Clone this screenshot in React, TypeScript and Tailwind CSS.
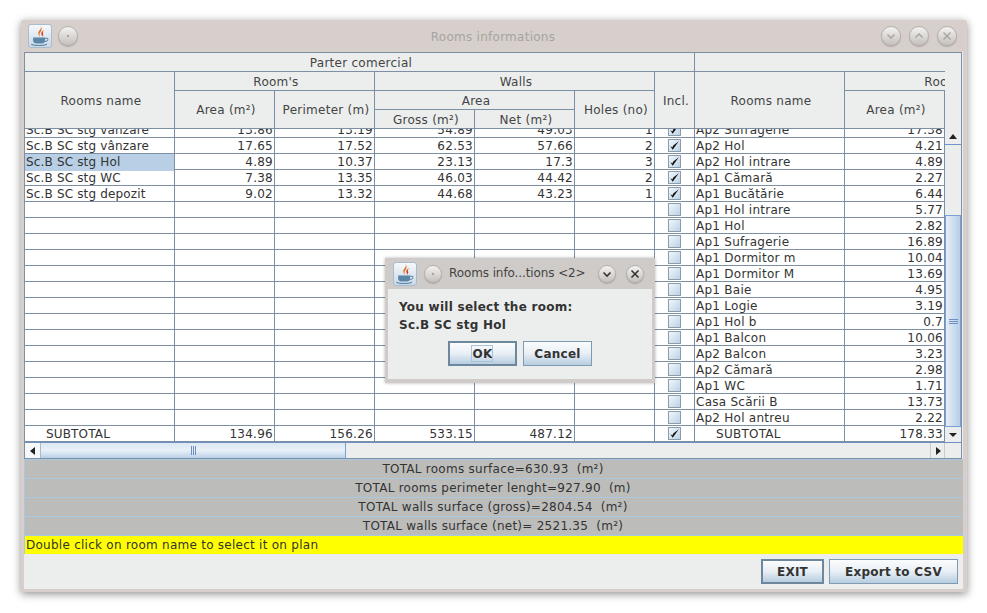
import React from 'react';

type Row = { name?: string; area?: string; perim?: string; gross?: string; net?: string; holes?: string; on: boolean; name2: string; area2: string; pad?: boolean };

const rows: Row[] = [
  { name: 'Sc.B SC stg vânzare', area: '13.86', perim: '13.19', gross: '54.89', net: '49.03', holes: '1', on: true, name2: 'Ap2 Sufragerie', area2: '17.38' },
  { name: 'Sc.B SC stg vânzare', area: '17.65', perim: '17.52', gross: '62.53', net: '57.66', holes: '2', on: true, name2: 'Ap2 Hol', area2: '4.21' },
  { name: 'Sc.B SC stg Hol', area: '4.89', perim: '10.37', gross: '23.13', net: '17.3', holes: '3', on: true, name2: 'Ap2 Hol intrare', area2: '4.89' },
  { name: 'Sc.B SC stg WC', area: '7.38', perim: '13.35', gross: '46.03', net: '44.42', holes: '2', on: true, name2: 'Ap1 Cămară', area2: '2.27' },
  { name: 'Sc.B SC stg depozit', area: '9.02', perim: '13.32', gross: '44.68', net: '43.23', holes: '1', on: true, name2: 'Ap1 Bucătărie', area2: '6.44' },
  { on: false, name2: 'Ap1 Hol intrare', area2: '5.77' },
  { on: false, name2: 'Ap1 Hol', area2: '2.82' },
  { on: false, name2: 'Ap1 Sufragerie', area2: '16.89' },
  { on: false, name2: 'Ap1 Dormitor m', area2: '10.04' },
  { on: false, name2: 'Ap1 Dormitor M', area2: '13.69' },
  { on: false, name2: 'Ap1 Baie', area2: '4.95' },
  { on: false, name2: 'Ap1 Logie', area2: '3.19' },
  { on: false, name2: 'Ap1 Hol b', area2: '0.7' },
  { on: false, name2: 'Ap1 Balcon', area2: '10.06' },
  { on: false, name2: 'Ap2 Balcon', area2: '3.23' },
  { on: false, name2: 'Ap2 Cămară', area2: '2.98' },
  { on: false, name2: 'Ap1 WC', area2: '1.71' },
  { on: false, name2: 'Casa Scării B', area2: '13.73' },
  { on: false, name2: 'Ap2 Hol antreu', area2: '2.22' },
  { name: 'SUBTOTAL', area: '134.96', perim: '156.26', gross: '533.15', net: '487.12', on: true, name2: 'SUBTOTAL', area2: '178.33', pad: true },
];

const totals = [
  'TOTAL rooms surface=630.93  (m²)',
  'TOTAL rooms perimeter lenght=927.90  (m)',
  'TOTAL walls surface (gross)=2804.54  (m²)',
  'TOTAL walls surface (net)= 2521.35  (m²)',
];

const cols = 'grid-cols-[150px_100px_100px_100px_100px_80px_40px_150px_100px]';
const numCell = 'border-r border-[#7d90a3] pr-[1px] text-right';
const head = 'flex items-center justify-center border-r border-b border-[#7d90a3] bg-[#eceeee] pl-[3px] pt-[2px] text-[#444] whitespace-nowrap';

function JavaIcon({ size }: { size: number }) {
  return (
    <svg width={size} height={size} viewBox="0 0 24 24">
      <path d="M12.5 1c2.200 3.400-3.400 5.500-2.200 9 .4 1.200 1.300 2.200 1.800 3-.6-2-1.200-3.200 0-4.800 1.400-2 2.700-3.800.4-7.200z" fill="#e2701a" />
      <path d="M16.500 5.500c-2.300 1.400-3.600 2.700-3 4.600.3.900.9 1.600.7 2.600 1.400-1.200 1.600-2.300 1.100-3.400-.5-1.200 0-2.400 1.200-3.800z" fill="#d8401c" />
      <path d="M4.500 13.500h13v3.500c0 1.900-1.600 3.300-3.500 3.300H8c-1.900 0-3.500-1.400-3.500-3.300z" fill="#5b86a6" />
      <path d="M17.500 14.500c2.500-.5 3.700.5 3 1.900-.6 1.100-2 1.700-3.400 1.900" fill="none" stroke="#5b86a6" strokeWidth="1.100" />
      <path d="M2.500 21c3.400 1.800 13.600 1.800 17 0" fill="none" stroke="#5b86a6" strokeWidth="1.300" />
    </svg>
  );
}

function IconButton({ cls }: { cls: string }) {
  return (
    <div className={`absolute flex items-center justify-center rounded-[3px] border border-[#a9bccd] bg-gradient-to-b from-[#f6f8fa] to-[#c9d9e8] ${cls}`}>
      <JavaIcon size={22} />
    </div>
  );
}

function Round({ cls, kind, dark }: { cls: string; kind: 'dot' | 'down' | 'up' | 'x'; dark?: boolean }) {
  const c = dark ? '#333' : '#a5a19d';
  return (
    <div className={`absolute flex items-center justify-center rounded-full border border-[#b5b0ac] bg-gradient-to-b from-[#f4f3f2] to-[#c4c0bc] shadow-[0_1px_1px_rgba(0,0,0,0.2)] ${cls}`}>
      <svg width="12" height="12" viewBox="0 0 12 12" fill="none" stroke={c} strokeWidth={dark ? 1.600 : 1.300}>
        {kind === 'dot' && <circle cx="6" cy="6" r="0.500" />}
        {kind === 'down' && <path d="M2.500 4.500 6 8l3.500-3.500" />}
        {kind === 'up' && <path d="M2.500 7.500 6 4l3.500 3.500" />}
        {kind === 'x' && <path d="M2.500 2.500l7 7m0-7l-7 7" />}
      </svg>
    </div>
  );
}

function Check({ on }: { on: boolean }) {
  return (
    <div className="mx-auto mt-px flex h-[13px] w-[13px] items-center justify-center border border-[#8b9cac] bg-gradient-to-br from-[#f2f6fa] to-[#bcd2e6]">
      {on && (
        <svg width="11" height="11" viewBox="0 0 9 9">
          <path d="M1 5l2 3 5-7-4.500 3.500-.8 1.600z" fill="#111" />
        </svg>
      )}
    </div>
  );
}

function Arrow({ dir }: { dir: 'up' | 'down' | 'left' | 'right' }) {
  const d = { up: 'M4 1l4 5H0z', down: 'M4 6L0 2h8z', left: 'M1 4l5-4v8z', right: 'M7 4L2 0v8z' }[dir];
  return (
    <svg width="8" height="8" viewBox="0 0 8 8">
      <path d={d} fill="#222" />
    </svg>
  );
}

function Btn({ label, cls, focused }: { label: string; cls: string; focused?: boolean }) {
  return (
    <div className={`absolute flex items-center justify-center bg-gradient-to-b from-[#fbfcfd] via-[#e8eff5] to-[#b7cde0] pt-px font-bold text-[#333] ${focused ? 'border-2 border-[#6d879c]' : 'border border-[#7f9ab3]'} ${cls}`}>
      {label}
    </div>
  );
}

export default function App(): JSX.Element {
  return (
    <div className="relative h-[613px] w-[987px] overflow-hidden bg-white font-[DejaVu_Sans] text-[12px] leading-[15px] tracking-[0.26px] text-[#333]">
      {/* main frame */}
      <div className="absolute left-[21px] top-[20px] h-[572px] w-[946px] rounded-t-[3px] bg-[#d6cfcc] shadow-[0_2px_9px_rgba(0,0,0,0.45)]">
        <div className="absolute left-[3px] top-[32px] h-[537px] w-[939px] bg-[#eceeee]" />
      </div>

      <IconButton cls="left-[28px] top-[24px] h-[24px] w-[24px]" />
      <Round cls="left-[58px] top-[26px] h-[20px] w-[20px]" kind="dot" />
      <div className="absolute left-[20px] top-[29px] w-[946px] pt-px text-center text-[#a8a3a0]">Rooms informations</div>
      <Round cls="left-[881px] top-[26px] h-[20px] w-[20px]" kind="down" />
      <Round cls="left-[909px] top-[26px] h-[20px] w-[20px]" kind="up" />
      <Round cls="left-[937px] top-[26px] h-[20px] w-[20px]" kind="x" />

      {/* table + scroll panes */}
      <div className="absolute left-[24px] top-[52px] h-[407px] w-[938px] border border-[#7d90a3] bg-[#eceeee]">
        <div className="absolute left-0 top-0 h-[76px] w-[920px] overflow-hidden">
          <div className={`grid w-[920px] ${cols} grid-rows-[19px_19px_19px_19px]`}>
            <div className={`${head} col-span-7`}>Parter comercial</div>
            <div className="col-span-2 border-b border-[#7d90a3]" />
            <div className={`${head} row-span-3`}>Rooms name</div>
            <div className={`${head} col-span-2`}>Room's</div>
            <div className={`${head} col-span-3`}>Walls</div>
            <div className={`${head} row-span-3`}>Incl.</div>
            <div className={`${head} row-span-3`}>Rooms name</div>
            <div className="relative overflow-hidden border-b border-[#7d90a3] bg-[#eceeee] leading-[20px]">
              <div className="absolute left-[2px] top-0 w-[200px] text-center text-[#444]">Room's</div>
            </div>
            <div className={`${head} col-start-2 row-span-2 row-start-3`}>Area (m²)</div>
            <div className={`${head} col-start-3 row-span-2 row-start-3`}>Perimeter (m)</div>
            <div className={`${head} col-span-2 col-start-4 row-start-3`}>Area</div>
            <div className={`${head} col-start-6 row-span-2 row-start-3`}>Holes (no)</div>
            <div className={`${head} col-start-9 row-span-2 row-start-3`}>Area (m²)</div>
            <div className={`${head} col-start-4 row-start-4`}>Gross (m²)</div>
            <div className={`${head} col-start-5 row-start-4`}>Net (m²)</div>
          </div>
        </div>

        <div className="absolute left-0 top-[76px] h-[313px] w-[920px] overflow-hidden bg-white">
          <div className="-mt-[7px] leading-[17px]">
            {rows.map((r, i) => (
              <div key={i} className={`grid h-4 w-[920px] ${cols} border-b border-[#7d90a3]`}>
                <div className={`overflow-hidden whitespace-nowrap border-r border-[#7d90a3] tracking-[0.16px] ${r.pad ? 'pl-[21px]' : 'pl-px'} ${i === 2 ? 'bg-[#b8cfe5]' : ''}`}>{r.name}</div>
                <div className={numCell}>{r.area}</div>
                <div className={numCell}>{r.perim}</div>
                <div className={numCell}>{r.gross}</div>
                <div className={numCell}>{r.net}</div>
                <div className={numCell}>{r.holes}</div>
                <div className="border-r border-[#7d90a3]"><Check on={r.on} /></div>
                <div className={`overflow-hidden whitespace-nowrap border-r border-[#7d90a3] ${r.pad ? 'pl-[21px]' : 'pl-px'}`}>{r.name2}</div>
                <div className={numCell}>{r.area2}</div>
              </div>
            ))}
          </div>
        </div>

        {/* vertical scrollbar */}
        <div className="absolute left-[920px] top-[76px] h-[313px] w-[16px] bg-[#eceeee]">
          <div className="flex h-[16px] items-center justify-center border-b border-[#6f95d0]"><Arrow dir="up" /></div>
          <div className="absolute left-0 top-[86px] flex h-[212px] w-[16px] items-center justify-center border-x border-b border-t border-[#7aa0d8] bg-gradient-to-r from-[#e6eef6] to-[#b6cee8]">
            <div className="h-[5px] w-[9px] border-y border-[#6f8fc0] after:mt-px after:block after:h-px after:bg-[#6f8fc0]" />
          </div>
          <div className="absolute bottom-0 left-0 flex h-[15px] w-[16px] items-center justify-center"><Arrow dir="down" /></div>
        </div>

        {/* horizontal scrollbar */}
        <div className="absolute left-0 top-[389px] h-[16px] w-[936px] border-t border-[#6f8fc0] bg-[#eceeee]">
          <div className="absolute left-0 top-0 flex h-[15px] w-[16px] items-center justify-center border-r border-[#a9bccd] bg-[#f6f7f8]"><Arrow dir="left" /></div>
          <div className="absolute left-[16px] top-0 flex h-[15px] w-[305px] items-center justify-center border-r border-[#7aa0d8] bg-gradient-to-b from-[#dce8f3] via-[#e9f0f7] to-[#b9d0e7]">
            <div className="flex h-[9px] gap-px">
              <div className="w-px bg-[#6f8fc0]" />
              <div className="w-px bg-[#6f8fc0]" />
              <div className="w-px bg-[#6f8fc0]" />
            </div>
          </div>
          <div className="absolute left-[905px] top-0 flex h-[15px] w-[15px] items-center justify-center border-x border-[#c4ccd3] bg-[#eceeee]"><Arrow dir="right" /></div>
        </div>
      </div>

      {/* totals */}
      <div className="absolute left-[24px] top-[459px] w-[939px] border-l border-t border-[#a9c9e3]">
        {totals.map(t => (
          <div key={t} className="flex h-[19px] items-center justify-center whitespace-pre border-b border-[#a9c9e3] bg-[#bcbdbb] pr-[2px] pt-px text-[#333]">{t}</div>
        ))}
        <div className="flex h-[18px] items-center whitespace-pre bg-[#ffff00] pl-px">Double click on room name to select it on plan</div>
      </div>

      <Btn label="EXIT" cls="left-[761px] top-[559px] h-[25px] w-[63px]" focused />
      <Btn label="Export to CSV" cls="left-[829px] top-[559px] h-[25px] w-[129px]" />

      {/* dialog */}
      <div className="absolute left-[385px] top-[258px] h-[125px] w-[270px] bg-[#cfcbc8] shadow-[0_0_3px_rgba(0,0,0,0.3)]">
        <div className="absolute left-[3px] top-[31px] h-[90px] w-[264px] bg-[#eceeee]">
          <div className="pl-[11px] pt-[9px] font-bold leading-[18px] text-[#333]">
            <div>You will select the room:</div>
            <div>Sc.B SC stg Hol</div>
          </div>
        </div>
      </div>
      <IconButton cls="left-[393px] top-[262px] h-[24px] w-[24px]" />
      <Round cls="left-[424px] top-[265px] h-[18px] w-[18px]" kind="dot" />
      <div className="absolute left-[449px] top-[266px] whitespace-nowrap tracking-[-0.1px] text-[#444]">Rooms info...tions &lt;2&gt;</div>
      <Round cls="left-[598px] top-[265px] h-[18px] w-[18px]" kind="down" dark />
      <Round cls="left-[626px] top-[265px] h-[18px] w-[18px]" kind="x" dark />
      <Btn label="OK" cls="left-[448px] top-[341px] h-[25px] w-[69px]" focused />
      <div className="absolute left-[471px] top-[345px] h-[17px] w-[22px] border border-[#a9c3da]" />
      <Btn label="Cancel" cls="left-[523px] top-[341px] h-[25px] w-[69px]" />
    </div>
  );
}
